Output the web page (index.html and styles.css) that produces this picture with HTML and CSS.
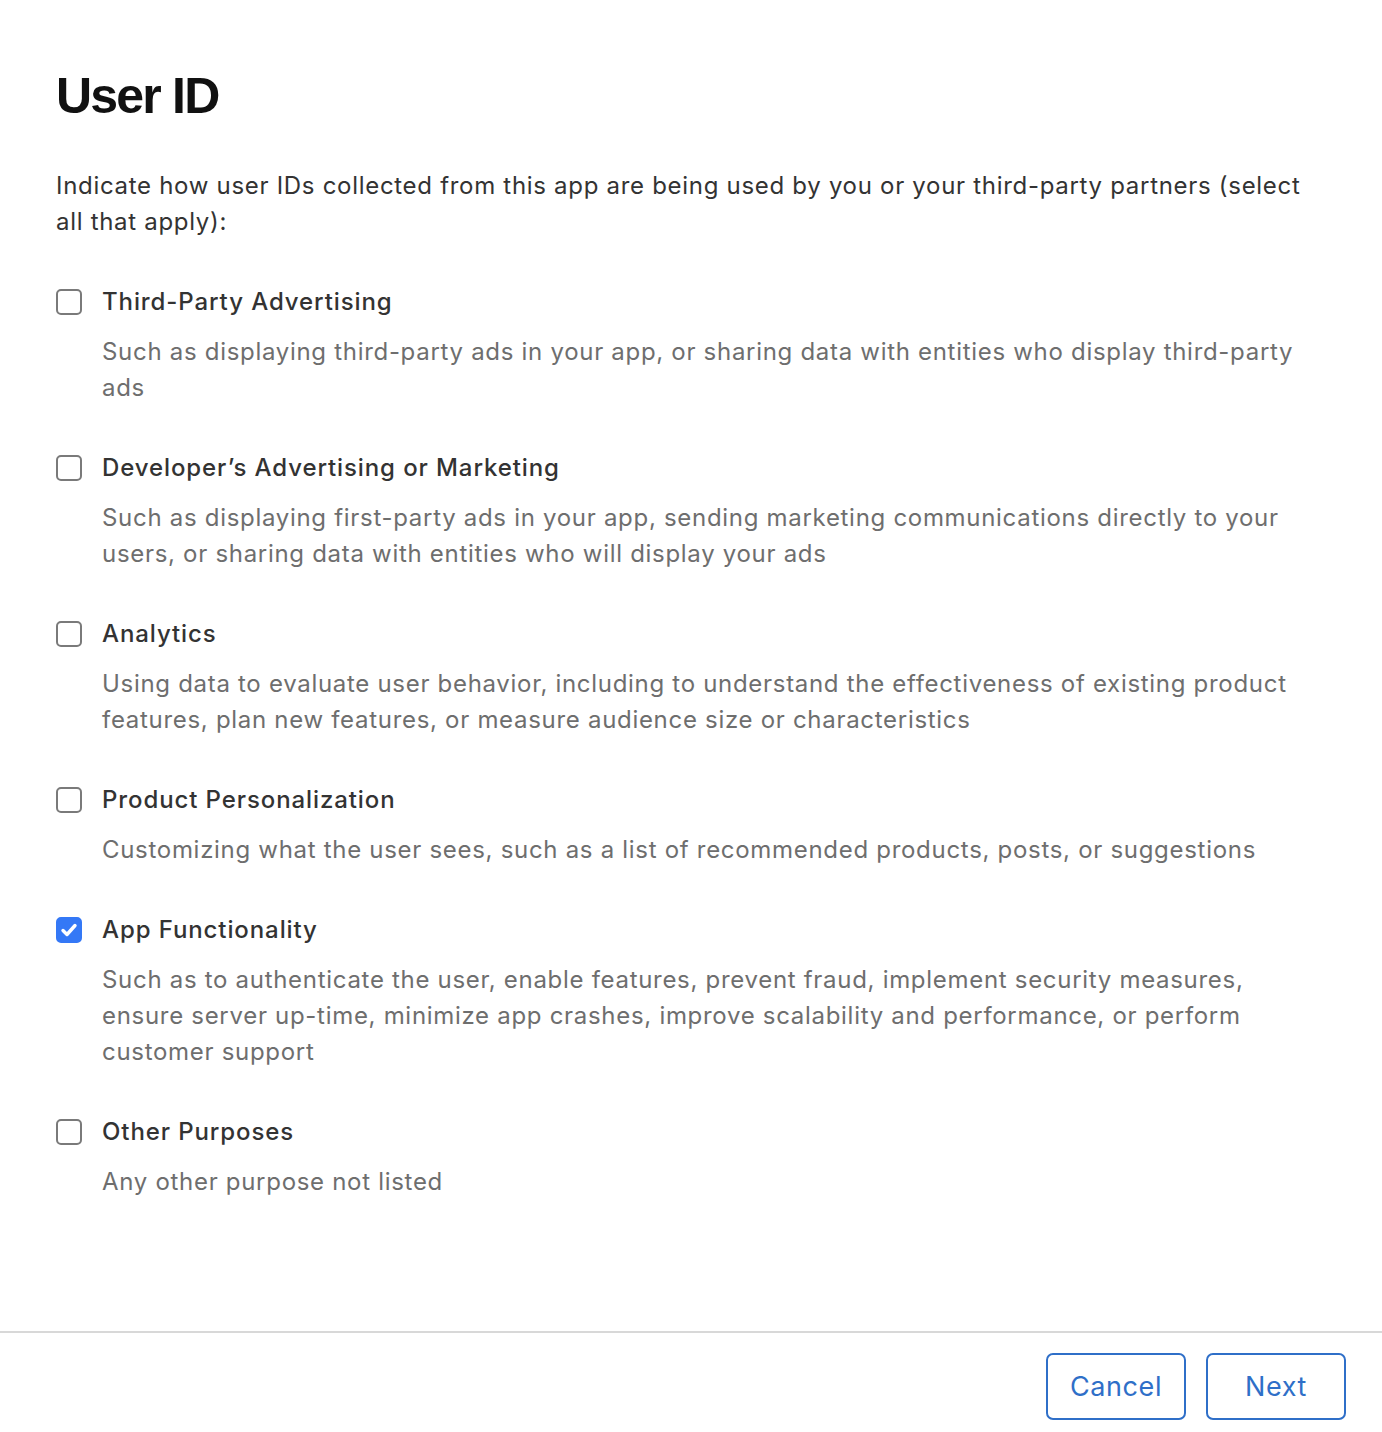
FILE: index.html
```html
<!doctype html>
<html lang="en">
  <head>
    <meta charset="UTF-8" />
    <meta name="viewport" content="width=device-width, initial-scale=1.0" />
    <title>User ID</title>
    <link rel="stylesheet" href="styles.css">
  </head>
  <body>
    <div class="dialog">
      <div class="content">
        <h1>User ID</h1>
        <p class="intro">
          Indicate how user IDs collected from this app are being used by you or your third-party partners (select all that apply):
        </p>

        <ul class="options">
          <li class="option">
            <span class="box"></span>
            <div class="text">
              <div class="label">Third-Party Advertising</div>
              <div class="desc">Such as displaying third-party ads in your app, or sharing data with entities who display third-party ads</div>
            </div>
          </li>
          <li class="option">
            <span class="box"></span>
            <div class="text">
              <div class="label">Developer’s Advertising or Marketing</div>
              <div class="desc">Such as displaying first-party ads in your app, sending marketing communications directly to your users, or sharing data with entities who will display your ads</div>
            </div>
          </li>
          <li class="option">
            <span class="box"></span>
            <div class="text">
              <div class="label">Analytics</div>
              <div class="desc">Using data to evaluate user behavior, including to understand the effectiveness of existing product features, plan new features, or measure audience size or characteristics</div>
            </div>
          </li>
          <li class="option">
            <span class="box"></span>
            <div class="text">
              <div class="label">Product Personalization</div>
              <div class="desc">Customizing what the user sees, such as a list of recommended products, posts, or suggestions</div>
            </div>
          </li>
          <li class="option">
            <span class="box checked">
              <svg viewBox="0 0 26 26" width="26" height="26">
                <path d="M7 13.5L11 17.5L19 8.5" fill="none" stroke="#fff" stroke-width="3.4" stroke-linecap="round" stroke-linejoin="round" />
              </svg>
            </span>
            <div class="text">
              <div class="label">App Functionality</div>
              <div class="desc">Such as to authenticate the user, enable features, prevent fraud, implement security measures, ensure server up-time, minimize app crashes, improve scalability and performance, or perform customer support</div>
            </div>
          </li>
          <li class="option">
            <span class="box"></span>
            <div class="text">
              <div class="label">Other Purposes</div>
              <div class="desc">Any other purpose not listed</div>
            </div>
          </li>
        </ul>
      </div>

      <div class="footer">
        <button class="btn">Cancel</button>
        <button class="btn">Next</button>
      </div>
    </div>
  </body>
</html>
```

FILE: styles.css
```css
* {
  box-sizing: border-box;
  margin: 0;
  padding: 0;
}

body {
  font-family: Inter, "Noto Sans", sans-serif;
  background: #fff;
  color: #333;
}

.dialog {
  width: 1382px;
  min-height: 1432px;
  display: flex;
  flex-direction: column;
}

.content {
  padding: 67px 56px 0;
  height: 1331px;
}

h1 {
  font-family: "Liberation Sans", Arial, sans-serif;
  font-size: 50px;
  font-weight: bold;
  color: #111;
  line-height: 58px;
  letter-spacing: -1.8px;
}

.intro {
  margin-top: 43px;
  font-size: 24px;
  line-height: 36px;
  letter-spacing: 0.7px;
  color: #333;
}

.options {
  list-style: none;
  margin-top: 44px;
}

.option {
  display: flex;
  gap: 21px;
  margin-bottom: 44px;
}

.box {
  flex: none;
  width: 26px;
  height: 26px;
  margin-top: 5px;
  border: 2px solid #7a7a7a;
  border-radius: 5px;
}

.box.checked {
  background: #3478f6;
  border-color: #3478f6;
  position: relative;
}

.box.checked svg {
  position: absolute;
  left: -2px;
  top: -2px;
}

.text {
  margin-left: -1px;
}

.label {
  font-size: 24px;
  line-height: 36px;
  font-weight: 500;
  letter-spacing: 0.9px;
  color: #333;
}

.desc {
  margin-top: 14px;
  font-size: 24px;
  line-height: 36px;
  letter-spacing: 0.7px;
  color: #6e6e6e;
}

.footer {
  border-top: 2px solid #d8d8d8;
  display: flex;
  justify-content: flex-end;
  gap: 20px;
  padding: 20px 36px 12px;
}

.btn {
  width: 140px;
  height: 67px;
  background: #fff;
  border: 2px solid #2f6fc8;
  border-radius: 7px;
  color: #2f6fc8;
  font-family: Inter, "Noto Sans", sans-serif;
  font-size: 27px;
  letter-spacing: 0.6px;
  cursor: pointer;
}
```
